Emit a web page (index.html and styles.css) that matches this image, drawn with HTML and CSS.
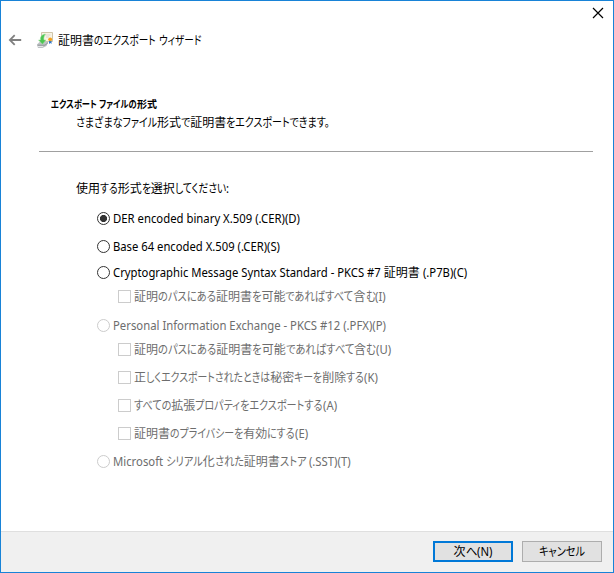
FILE: index.html
```
<!DOCTYPE html>
<html lang="ja">
<head>
<meta charset="utf-8">
<title>証明書のエクスポート ウィザード</title>
<link rel="stylesheet" href="styles.css">
</head>
<body>
<div class="window">
  <header class="titlebar">
    <svg class="back" viewBox="0 0 14 12" width="14" height="12"><path d="M13.200 6H2.200M6.700 1.200 1.900 6l4.800 4.800" fill="none" stroke="#808080" stroke-width="1.800"/></svg>
    <svg class="logo" viewBox="0 0 16 16" width="16" height="16">
      <path d="M4.500.5h11v9h-11z" fill="#f8f3e4" stroke="#cfc5aa"/>
      <path d="M8 3h5.500M9 5h3" stroke="#d8d5cd"/>
      <path d="M0 12.500l3-3h8.500l-2 4.500-4 2H1z" fill="#bfc3c6"/>
      <path d="M.5 13.200h7.500l3-2.500" fill="none" stroke="#909599"/>
      <path d="M1 14.500h5" stroke="#e4e6e8"/>
      <path d="M8.500 2C4.500 2.500 3 5 3.500 8H1.500l4 4.300L9 8H7C6.600 6 7 4 8.500 2z" fill="#4cc552" stroke="#9fe09c" stroke-width=".5"/>
      <path d="M12 8.500v3.500l1.300-1 1.200 1V8.500z" fill="#2f78c9"/>
      <circle cx="13.200" cy="7.300" r="1.900" fill="#f5a11c"/>
    </svg>
    <h1 class="title" data-width="143">証明書のエクスポート ウィザード</h1>
    <svg class="close" viewBox="0 0 12 12" width="12" height="12"><path d="M1 1l10 10M11 1 1 11" stroke="#000" stroke-width="1.200"/></svg>
  </header>
  <section class="intro">
    <h2 class="heading" data-width="106">エクスポート ファイルの形式</h2>
    <p class="description" data-width="254">さまざまなファイル形式で証明書をエクスポートできます。</p>
  </section>
  <main class="content">
    <p class="prompt" data-width="153">使用する形式を選択してください:</p>
    <div class="row"><i class="radio selected"></i><span data-width="187">DER encoded binary X.509 (.CER)(D)</span></div>
    <div class="row gap-11"><i class="radio"></i><span data-width="167">Base 64 encoded X.509 (.CER)(S)</span></div>
    <div class="row gap-9"><i class="radio"></i><span data-width="354">Cryptographic Message Syntax Standard - PKCS #7 証明書 (.P7B)(C)</span></div>
    <div class="row sub off gap-7"><i class="check"></i><span data-width="252">証明のパスにある証明書を可能であればすべて含む(I)</span></div>
    <div class="row off gap-12"><i class="radio"></i><span data-width="273">Personal Information Exchange - PKCS #12 (.PFX)(P)</span></div>
    <div class="row sub off gap-7"><i class="check"></i><span data-width="257">証明のパスにある証明書を可能であればすべて含む(U)</span></div>
    <div class="row sub off gap-11"><i class="check"></i><span data-width="244">正しくエクスポートされたときは秘密キーを削除する(K)</span></div>
    <div class="row sub off gap-11"><i class="check"></i><span data-width="203">すべての拡張プロパティをエクスポートする(A)</span></div>
    <div class="row sub off gap-11"><i class="check"></i><span data-width="174">証明書のプライバシーを有効にする(E)</span></div>
    <div class="row off gap-11"><i class="radio"></i><span data-width="238">Microsoft シリアル化された証明書ストア (.SST)(T)</span></div>
  </main>
  <footer class="footer">
    <button class="button primary"><span data-width="39">次へ(N)</span></button>
    <button class="button"><span data-width="46">キャンセル</span></button>
  </footer>
</div>
<script src="labels.js"></script>
</body>
</html>
```
FILE: styles.css
```
* { box-sizing: border-box; }
body {
  margin: 0;
  background: #fff;
  color: #000;
  font: 12px/17px "Noto Sans", "Noto Sans CJK JP", sans-serif;
}
h1, h2, p { margin: 0; font-size: inherit; font-weight: normal; }
.window {
  display: flex;
  flex-direction: column;
  width: 614px;
  height: 573px;
  border: 1px solid #1883d7;
}
.titlebar {
  display: flex;
  height: 94px;
  padding: 31px 9px 0 7px;
  align-items: flex-start;
}
.back { margin-top: 2px; }
.logo { margin-left: 15px; }
.title { margin-left: 5px; }
.close { margin: -25px 0 0 auto; }
.intro {
  height: 57px;
  margin: 0 20px 0 38px;
  border-bottom: 1px solid #a0a0a0;
}
.heading {
  margin-left: 12px;
  font-size: 10px;
  font-weight: bold;
  line-height: 18px;
}
.description { margin-left: 37px; line-height: 20px; }
.content { flex: 1; padding: 28px 0 0 96px; }
.prompt { margin: 0 0 13px -21px; }
.row { display: flex; align-items: center; height: 17px; gap: 3px; }
.sub { padding-left: 21px; gap: 3px; }
.off { color: #6d6d6d; }
.gap-7 { margin-top: 7px; }
.gap-9 { margin-top: 9px; }
.gap-11 { margin-top: 11px; }
.gap-12 { margin-top: 12px; }
.radio, .check {
  flex: none;
  width: 13px;
  height: 13px;
  border: 1px solid #333;
}
.radio { border-radius: 50%; }
.selected { background: radial-gradient(circle, #333 3.2px, #fff 3.9px); }
.off .radio, .off .check, .off.row > i { border-color: #ccc; }
.footer {
  display: flex;
  justify-content: flex-end;
  gap: 9px;
  height: 41px;
  padding: 9px 11px 0 0;
  border-top: 1px solid #dfdfdf;
  background: #f0f0f0;
}
.button {
  display: flex;
  justify-content: center;
  align-items: center;
  width: 80px;
  height: 21px;
  padding: 0;
  border: 1px solid #adadad;
  background: #e1e1e1;
  color: #000;
  font: inherit;
}
.primary { border: 2px solid #0078d7; }
[data-width] { white-space: nowrap; }
.run { display: inline-block; vertical-align: top; white-space: pre; transform-origin: 0 0; }
.kana { font-feature-settings: "palt"; }
```
FILE: labels.js
```
// Condenses kana and Latin runs so each label fills its set width; kanji keep full width.
const LATIN_SCALE = 0.943;

document.querySelectorAll('[data-width]').forEach((label) => {
  const parts = label.textContent.match(/[一-龥]+|[ぁ-ヿ。]+|[\x20-\x7e]+/g);
  label.textContent = '';
  const runs = parts.map((text) => {
    const kind = /[一-龥]/.test(text) ? 'kanji' : /[ぁ-ヿ。]/.test(text) ? 'kana' : 'latin';
    const el = document.createElement('span');
    el.className = 'run ' + kind;
    el.textContent = text;
    label.append(el);
    return { el, kind, width: el.getBoundingClientRect().width };
  });
  const sum = (kind) => runs.filter((r) => r.kind === kind).reduce((t, r) => t + r.width, 0);
  const target = Number(label.dataset.width);
  const kana = sum('kana');
  const latin = kana ? LATIN_SCALE : (target - sum('kanji')) / sum('latin');
  const scale = { kanji: 1, latin, kana: kana ? (target - sum('kanji') - sum('latin') * latin) / kana : 1 };
  runs.forEach(({ el, kind, width }) => {
    el.style.width = width * scale[kind] + 'px';
    el.style.transform = 'scaleX(' + scale[kind] + ')';
  });
});
```
